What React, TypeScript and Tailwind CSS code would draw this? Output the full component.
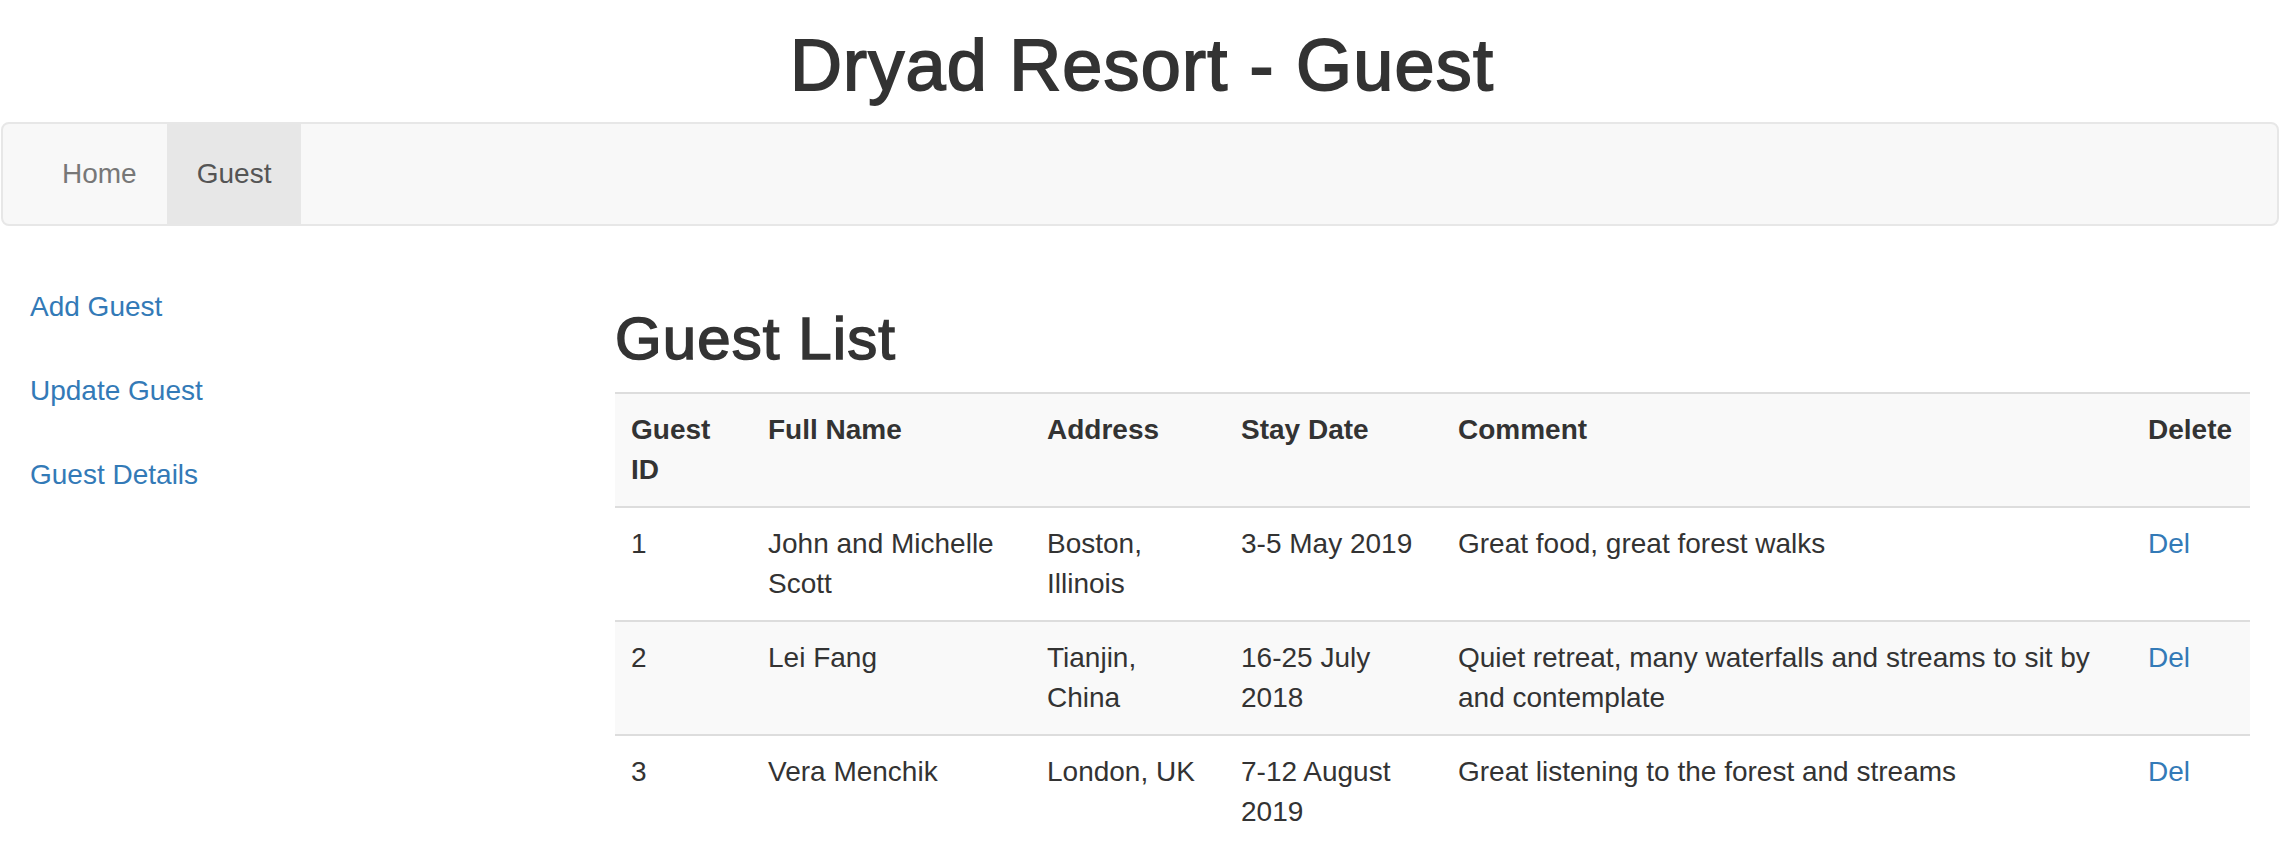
const guests = [
  { id: 1, name: "John and Michelle Scott", address: "Boston, Illinois", stay: "3-5 May 2019", comment: "Great food, great forest walks" },
  { id: 2, name: "Lei Fang", address: "Tianjin, China", stay: "16-25 July 2018", comment: "Quiet retreat, many waterfalls and streams to sit by and contemplate" },
  { id: 3, name: "Vera Menchik", address: "London, UK", stay: "7-12 August 2019", comment: "Great listening to the forest and streams" },
];

const sideLinks = ["Add Guest", "Update Guest", "Guest Details"];

const cell = "border-t-2 border-[#ddd] p-[16px] align-top text-left";

const App = () => {
  return (
    <div className="min-h-screen bg-white font-['Liberation_Sans',Helvetica,Arial,sans-serif] text-[28px] leading-[40px] text-[#333]">
      <h1 className="pt-[26px] text-center text-[72px] leading-[79px] font-normal tracking-[1.2px] [-webkit-text-stroke:1.8px_#333]">
        Dryad Resort - Guest
      </h1>

      <nav className="mt-[17px] ml-[1px] flex h-[104px] w-[2278px] rounded-[8px] border-2 border-[#e7e7e7] bg-[#f8f8f8]">
        <ul className="ml-[29px] flex">
          <li>
            <a href="#" className="block px-[30px] py-[30px] text-[#777]">Home</a>
          </li>
          <li>
            <a href="#" className="block bg-[#e7e7e7] px-[30px] py-[30px] text-[#555]">Guest</a>
          </li>
        </ul>
      </nav>

      <div className="mt-[40px] flex">
        <ul className="flex w-[615px] shrink-0 flex-col gap-[4px] pt-[1px]">
          {sideLinks.map((label) => (
            <li key={label}>
              <a href="#" className="block px-[30px] py-[20px] text-[#337ab7]">{label}</a>
            </li>
          ))}
        </ul>

        <main className="w-[1635px]">
          <h2 className="mt-[40px] mb-[20px] text-[60px] leading-[66px] font-normal tracking-[1.1px] [-webkit-text-stroke:1.6px_#333]">
            Guest List
          </h2>
          <table className="w-[1635px] table-fixed border-collapse">
            <colgroup>
              <col className="w-[137px]" />
              <col className="w-[279px]" />
              <col className="w-[194px]" />
              <col className="w-[217px]" />
              <col className="w-[690px]" />
              <col className="w-[118px]" />
            </colgroup>
            <tbody>
              <tr className="bg-[#f9f9f9]">
                <th className={cell}>Guest ID</th>
                <th className={cell}>Full Name</th>
                <th className={cell}>Address</th>
                <th className={cell}>Stay Date</th>
                <th className={cell}>Comment</th>
                <th className={cell}>Delete</th>
              </tr>
              {guests.map((g, i) => (
                <tr key={g.id} className={i % 2 === 1 ? "bg-[#f9f9f9]" : ""}>
                  <td className={cell}>{g.id}</td>
                  <td className={cell}>{g.name}</td>
                  <td className={cell}>{g.address}</td>
                  <td className={cell}>{g.stay}</td>
                  <td className={cell}>{g.comment}</td>
                  <td className={cell}>
                    <a href="#" className="text-[#337ab7]">Del</a>
                  </td>
                </tr>
              ))}
            </tbody>
          </table>
        </main>
      </div>
    </div>
  );
};

export default App;
